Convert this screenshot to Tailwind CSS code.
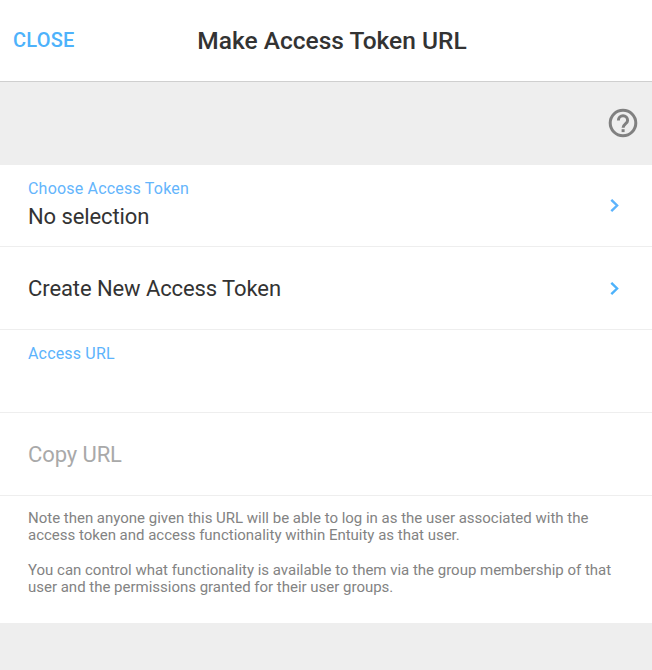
<!DOCTYPE html>
<html lang="en">
  <head>
    <meta charset="UTF-8" />
    <meta name="viewport" content="width=device-width, initial-scale=1.0" />
    <title>Make Access Token URL</title>
    <script src="https://cdn.jsdelivr.net/npm/@tailwindcss/browser@4"></script>
  </head>

  <body class="bg-[#eeeeee] min-h-screen font-['Roboto',sans-serif] text-[#333333]">
    <!-- Header -->
    <header class="grid grid-cols-[1fr_auto_1fr] items-center h-[82px] pl-[13px] bg-white border-b border-[#cfcfcf]">
      <button class="justify-self-start pb-px text-[20px] font-medium tracking-[0.25px] text-[#4db2fb]">CLOSE</button>
      <h1 class="pt-px pr-px text-[24.5px] font-medium">Make Access Token URL</h1>
    </header>

    <!-- Help bar -->
    <div class="flex items-center justify-end h-[83px] pr-3 pb-0.5">
      <button aria-label="Help">
        <svg class="size-[34px]" viewBox="0 0 34 34" fill="none" stroke="#808080" stroke-width="3">
          <circle cx="17" cy="17" r="12.8" />
          <path d="M12.400 14.400a4.600 4.600 0 0 1 9.200 0c0 3.400-4.500 3.600-4.500 7.300" />
          <path d="M17.100 23.200v2.900" />
        </svg>
      </button>
    </div>

    <!-- Options -->
    <main class="bg-white">
      <div class="flex items-center justify-between h-[82px] pl-7 pr-[32px] border-b border-[#eeeeee]">
        <div class="pb-0.5">
          <p class="text-[16px] leading-6 tracking-[0.2px] text-[#64b5fc]">Choose Access Token</p>
          <p class="text-[22px] leading-8 tracking-[-0.1px]">No selection</p>
        </div>
        <svg class="w-[11px] h-[14px]" viewBox="0 0 11 14" fill="none" stroke="#5cb3fc" stroke-width="2.4">
          <path d="M2.300 0.800l5.800 5.700-5.800 5.700" />
        </svg>
      </div>

      <div class="flex items-center justify-between h-[83px] pl-7 pr-[32px] border-b border-[#eeeeee]">
        <p class="text-[22px] tracking-[-0.09px]">Create New Access Token</p>
        <svg class="w-[11px] h-[14px] mt-px" viewBox="0 0 11 14" fill="none" stroke="#4db2fb" stroke-width="2.4">
          <path d="M2.300 0.800l5.800 5.700-5.800 5.700" />
        </svg>
      </div>

      <div class="h-[83px] pl-7 pt-3 border-b border-[#eeeeee]">
        <p class="text-[16px] leading-6 tracking-[0.17px] text-[#5cb3fc]">Access URL</p>
      </div>

      <div class="flex items-center h-[83px] pl-7 border-b border-[#eeeeee]">
        <p class="text-[22px] tracking-[-0.1px] text-[#a9a9a9]">Copy URL</p>
      </div>

      <!-- Note -->
      <div class="h-[127px] pl-7 pt-3.5 text-[15px] leading-[17.3px] tracking-[-0.01px] text-[#838383]">
        <p>Note then anyone given this URL will be able to log in as the user associated with the<br />access token and access functionality within Entuity as that user.</p>
        <p class="mt-[17px]">You can control what functionality is available to them via the group membership of that<br />user and the permissions granted for their user groups.</p>
      </div>
    </main>
  </body>
</html>
